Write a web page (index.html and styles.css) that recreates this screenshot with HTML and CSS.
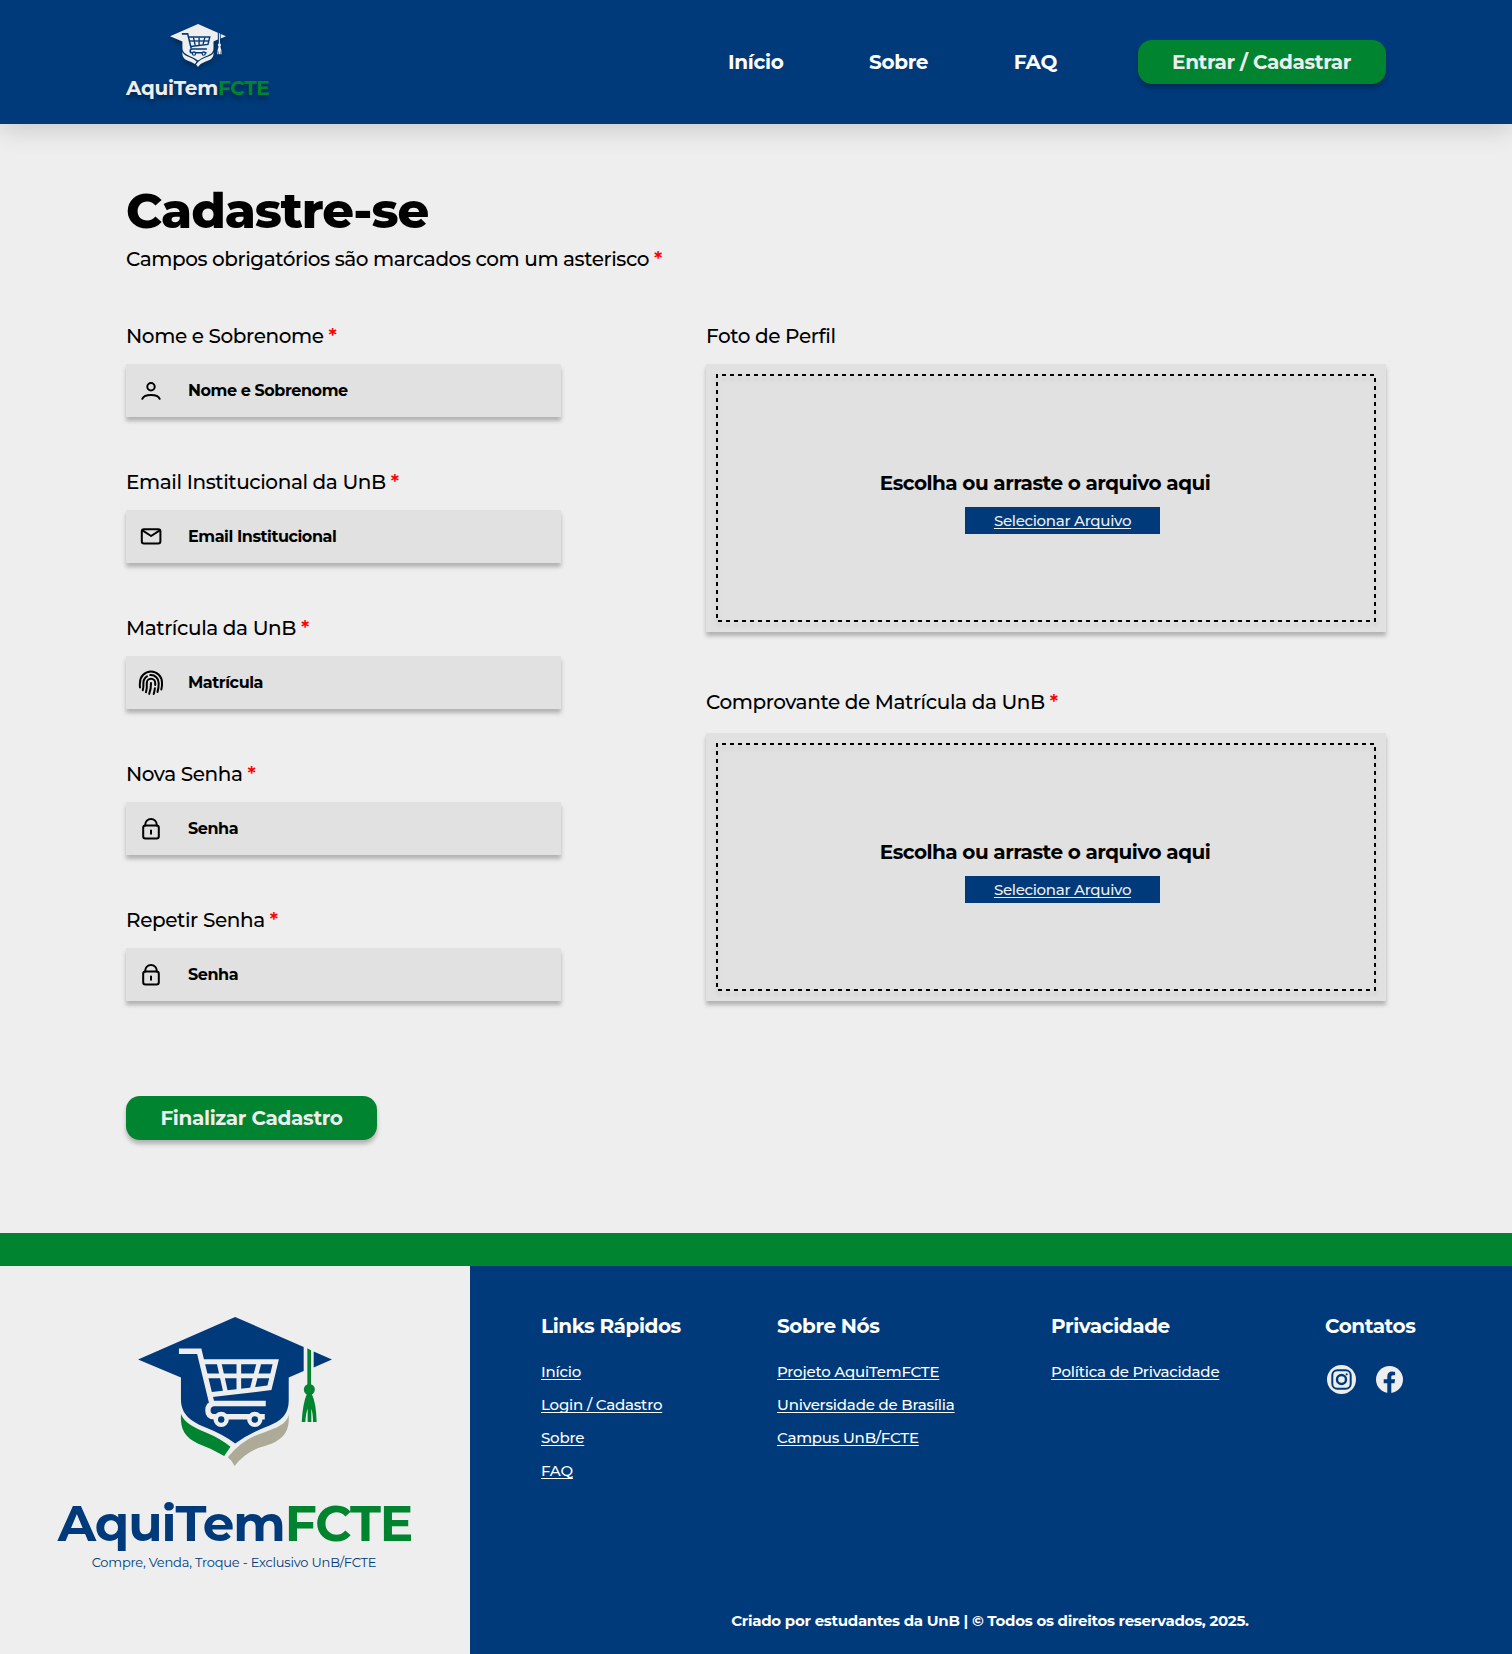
FILE: index.html
```html
<!DOCTYPE html>
<html lang="pt-BR">
<head>
<meta charset="utf-8">
<title>Cadastre-se | AquiTemFCTE</title>
<link rel="stylesheet" href="styles.css">
</head>
<body>
<svg class="sprite" width="0" height="0" aria-hidden="true">
  <symbol id="emblem" viewBox="54 50 583 448">
    <g class="emblem-cap">
      <path d="M54 178 346 50 552 140V212L507 232V300C507 350 475 366 440 380Q384 402 346 430Q308 402 252 380C214 364 183 343 183 298V232Z"/>
      <path d="M582 154 637 178 582 202Z"/>
    </g>
    <path class="emblem-left" d="M183 342C194 370 225 384 258 397Q300 414 332 440L313 468Q275 445 235 431C196 413 180 390 183 342Z"/>
    <path class="emblem-right" d="M507 345C500 373 470 384 432 397Q365 418 324 472Q337 482 344 498Q378 456 425 441C490 424 510 397 507 345Z"/>
    <g class="emblem-tassel">
      <path d="M563 144 574 150V256H563Z"/>
      <circle cx="569" cy="268" r="16.500"/>
      <path d="M562 280H576Q590 310 591 366H580Q580 340 575 326V366H564V326Q558 340 557 366H546Q549 310 562 280Z"/>
    </g>
    <g class="emblem-cart">
      <path d="M177 153H238L275 306" stroke-width="16"/>
      <path d="M247 184.500H468L449 263L270 284" stroke-width="15"/>
      <path d="M255 227H458" stroke-width="14"/>
      <path d="M298 190 317 275M357 190V272M417 190 397 268" stroke-width="14"/>
      <path d="M438 310H284Q264 312 264 331Q264 350 284 350H435" stroke-width="16"/>
      <circle cx="304" cy="358" r="16" stroke-width="14"/>
      <circle cx="405" cy="358" r="16" stroke-width="14"/>
    </g>
    <circle class="emblem-cap" cx="304" cy="358" r="9.500"/>
    <circle class="emblem-cap" cx="405" cy="358" r="9.500"/>
  </symbol>
  <symbol id="lock" viewBox="0 0 26 26">
    <rect x="5.200" y="9.500" width="15.600" height="13" rx="2.200"/>
    <path d="M7.200 9.500V8.900a5.800 6 0 0 1 11.600 0V9.500M13 14.500v3.200"/>
  </symbol>
</svg>

<header class="header">
  <a class="brand">
    <svg class="brand-emblem"><use href="#emblem"/></svg>
    <span class="brand-name">AquiTem<span class="green">FCTE</span></span>
  </a>
  <nav class="nav">
    <a>Início</a>
    <a>Sobre</a>
    <a>FAQ</a>
    <a class="btn btn-login">Entrar / Cadastrar</a>
  </nav>
</header>

<main class="main">
  <h1 class="title">Cadastre-se</h1>
  <p class="subtitle">Campos obrigatórios são marcados com um asterisco <span class="req">*</span></p>
  <form>
    <div class="columns">
      <div class="fields">
        <div class="field">
          <label class="label">Nome e Sobrenome <span class="req">*</span></label>
          <div class="input-box">
            <svg class="icon" viewBox="0 0 26 26"><circle cx="13" cy="8.700" r="3.700"/><path d="M4.300 20.800C6.500 15.800 19.500 15.800 21.700 20.800"/></svg>
            <input class="input" type="text" placeholder="Nome e Sobrenome">
          </div>
        </div>
        <div class="field">
          <label class="label">Email Institucional da UnB <span class="req">*</span></label>
          <div class="input-box">
            <svg class="icon" viewBox="0 0 26 26"><rect x="3.800" y="5.300" width="18.600" height="14.200" rx="2.200"/><path d="M4.800 6.600 13.100 12 21.400 6.600"/></svg>
            <input class="input" type="email" placeholder="Email Institucional">
          </div>
        </div>
        <div class="field">
          <label class="label">Matrícula da UnB <span class="req">*</span></label>
          <div class="input-box">
            <svg class="icon icon-print" viewBox="0 0 26 26"><path d="M2 17.500Q1.500 15.500 2 12.500A11 11 0 0 1 24 12.500Q24.300 16 23.300 19.500M4.800 20.200Q5.600 17 5.400 13A7.600 7.600 0 0 1 9 6.400M12.300 5.100A7.700 7.700 0 0 1 20.700 13Q20.800 17.500 19.500 22M8 22.300Q9.200 18 8.800 13A4.200 4.200 0 0 1 17.200 13V15M16.900 18.200Q16.600 21 15.700 24M11.200 23.900Q13.200 18.500 13 13"/></svg>
            <input class="input" type="text" placeholder="Matrícula">
          </div>
        </div>
        <div class="field">
          <label class="label">Nova Senha <span class="req">*</span></label>
          <div class="input-box">
            <svg class="icon"><use href="#lock"/></svg>
            <input class="input" type="password" placeholder="Senha">
          </div>
        </div>
        <div class="field">
          <label class="label">Repetir Senha <span class="req">*</span></label>
          <div class="input-box">
            <svg class="icon"><use href="#lock"/></svg>
            <input class="input" type="password" placeholder="Senha">
          </div>
        </div>
      </div>
      <div class="uploads">
        <div class="upload">
          <label class="label">Foto de Perfil</label>
          <div class="dropzone">
            <svg class="dashes"><rect x="1" y="1" width="658" height="246"/></svg>
            <p class="drop-text">Escolha ou arraste o arquivo aqui</p>
            <a class="drop-btn">Selecionar Arquivo</a>
          </div>
        </div>
        <div class="upload upload-proof">
          <label class="label">Comprovante de Matrícula da UnB <span class="req">*</span></label>
          <div class="dropzone">
            <svg class="dashes"><rect x="1" y="1" width="658" height="246"/></svg>
            <p class="drop-text">Escolha ou arraste o arquivo aqui</p>
            <a class="drop-btn">Selecionar Arquivo</a>
          </div>
        </div>
      </div>
    </div>
    <button class="btn btn-submit" type="button">Finalizar Cadastro</button>
  </form>
</main>

<footer class="footer">
  <section class="footer-brand">
    <svg class="footer-emblem"><use href="#emblem"/></svg>
    <p class="footer-name">AquiTem<span class="green">FCTE</span></p>
    <p class="tagline">Compre, Venda, Troque - Exclusivo UnB/FCTE</p>
  </section>
  <section class="footer-info">
    <div class="footer-cols">
      <div class="footer-col">
        <h2>Links Rápidos</h2>
        <a>Início</a>
        <a>Login / Cadastro</a>
        <a>Sobre</a>
        <a>FAQ</a>
      </div>
      <div class="footer-col">
        <h2>Sobre Nós</h2>
        <a>Projeto AquiTemFCTE</a>
        <a>Universidade de Brasília</a>
        <a>Campus UnB/FCTE</a>
      </div>
      <div class="footer-col">
        <h2>Privacidade</h2>
        <a>Política de Privacidade</a>
      </div>
      <div class="footer-col">
        <h2>Contatos</h2>
        <div class="social">
          <svg width="29" height="29" viewBox="0 0 29 29"><circle class="disc" cx="14.500" cy="14.500" r="14.500"/><rect class="line" x="5.300" y="5.300" width="18.400" height="18.400" rx="5"/><circle class="line ring" cx="14.500" cy="14.500" r="4.500"/><circle class="dot" cx="19.700" cy="9.300" r="1.100"/></svg>
          <svg width="27" height="27" viewBox="0 0 27 27"><circle class="disc" cx="13.500" cy="13.500" r="13.500"/><path class="dot" d="M11.300 27V17.200H7.700V13.200H11.300V10.400C11.300 7.200 13.200 5.600 16.200 5.600Q17.800 5.600 19.100 5.900V9.300H17.200C15.700 9.300 15.300 10 15.300 11.200V13.200H19.100L18.500 17.200H15.300V27Z"/></svg>
        </div>
      </div>
    </div>
    <p class="copyright">Criado por estudantes da UnB | © Todos os direitos reservados, 2025.</p>
  </section>
</footer>
</body>
</html>
```
FILE: styles.css
```css
:root {
  --blue: #003a7a;
  --green: #00842f;
  --light: #eeeeee;
  --shadow: 0 4px 4px rgba(0, 0, 0, .25);
}

* { box-sizing: border-box; margin: 0; padding: 0; }

body {
  background: var(--light);
  color: #000;
  font-family: "Montserrat", "Inter", sans-serif;
}

.sprite { display: block; position: absolute; }
.green { color: var(--green); }
.req { color: #f00; font-weight: 600; }

/* Emblem */
.emblem-cap { fill: var(--cap); }
.emblem-left { fill: var(--left); }
.emblem-right { fill: var(--right); }
.emblem-tassel { fill: var(--left); }
.emblem-cart { fill: none; stroke: var(--cart); }

/* Header */
.header {
  position: relative;
  display: flex;
  justify-content: space-between;
  align-items: center;
  height: 124px;
  padding: 0 126px;
  background: var(--blue);
  box-shadow: 0 4px 25px rgba(0, 0, 0, .17);
}
.brand {
  display: flex;
  flex-direction: column;
  align-items: center;
  gap: 9px;
  margin-top: -1px;
}
.brand-emblem {
  --cap: var(--light);
  --left: var(--light);
  --right: var(--light);
  --cart: var(--blue);
  width: 56px;
  height: 43px;
  filter: drop-shadow(0 4px 2px rgba(0, 0, 0, .25));
}
.brand-name {
  color: var(--light);
  font-size: 20px;
  font-weight: 700;
  letter-spacing: -.25px;
  line-height: 24px;
  text-shadow: 0 4px 4px rgba(0, 0, 0, .35);
}
.nav {
  display: flex;
  align-items: center;
  gap: 85.500px;
  color: #fff;
  font-size: 20px;
  font-weight: 700;
  letter-spacing: -.3px;
  line-height: 24px;
}
.btn {
  display: flex;
  align-items: center;
  justify-content: center;
  height: 44px;
  border: 0;
  border-radius: 14px;
  background: var(--green);
  box-shadow: var(--shadow);
  color: var(--light);
  font: 700 20px/24px "Montserrat", "Inter", sans-serif;
  letter-spacing: -.34px;
}
.btn-login { width: 248px; margin-left: -4.500px; padding-right: 1px; }
.btn-submit { width: 251px; margin-top: 95px; }

/* Form */
.main { height: 1109px; padding: 56px 126px 0; }
.title {
  font-size: 49.500px;
  font-weight: 800;
  letter-spacing: -1.100px;
  line-height: 60px;
}
.subtitle {
  margin-top: 7px;
  font-size: 20px;
  font-weight: 500;
  letter-spacing: -.42px;
  line-height: 24px;
}
.columns {
  display: flex;
  justify-content: space-between;
  margin-top: 53px;
}
.fields { display: flex; flex-direction: column; gap: 53px; width: 435px; }
.uploads { display: flex; flex-direction: column; gap: 58px; width: 680px; }
.field, .upload { display: flex; flex-direction: column; gap: 16px; }
.upload-proof { gap: 19px; }
.label {
  font-size: 20px;
  font-weight: 500;
  letter-spacing: -.4px;
  line-height: 24px;
}
.input-box {
  display: flex;
  align-items: center;
  gap: 24px;
  height: 53px;
  padding: 0 12px;
  background: #e1e1e1;
  box-shadow: var(--shadow);
}
.icon {
  flex: none;
  width: 26px;
  height: 26px;
  fill: none;
  stroke: #000;
  stroke-width: 2;
  stroke-linecap: round;
  stroke-linejoin: round;
}
.input {
  flex: 1;
  min-width: 0;
  padding-top: 1px;
  border: 0;
  background: none;
  font: 700 16px/20px "Montserrat", "Inter", sans-serif;
  letter-spacing: -.43px;
}
.input::placeholder { color: #000; opacity: 1; }
.dropzone {
  position: relative;
  display: flex;
  flex-direction: column;
  align-items: center;
  justify-content: center;
  gap: 12px;
  height: 268px;
  padding-top: 9px;
  background: #e1e1e1;
  box-shadow: var(--shadow);
}
.dashes {
  position: absolute;
  inset: 10px;
  width: 660px;
  height: 248px;
  overflow: visible;
  fill: none;
  stroke: #000;
  stroke-width: 2;
  stroke-dasharray: 4 4;
  stroke-dashoffset: 3;
  filter: drop-shadow(0 4px 2px rgba(0, 0, 0, .12));
}
.drop-text {
  margin-right: 2px;
  font-size: 20px;
  font-weight: 700;
  letter-spacing: -.5px;
  line-height: 24px;
}
.drop-btn {
  width: 195px;
  height: 27px;
  margin-left: 33px;
  background: var(--blue);
  color: var(--light);
  font-size: 15px;
  font-weight: 500;
  letter-spacing: -.3px;
  line-height: 27px;
  text-align: center;
  text-decoration: underline 1px;
  text-underline-offset: 2px;
  text-decoration-skip-ink: none;
}

/* Footer */
.footer {
  display: grid;
  grid-template-columns: 470px 1fr;
  height: 421px;
  border-top: 33px solid var(--green);
}
.footer-brand {
  display: flex;
  flex-direction: column;
  align-items: center;
  padding-top: 51px;
  color: var(--blue);
}
.footer-emblem {
  --cap: var(--blue);
  --left: var(--green);
  --right: #adab98;
  --cart: var(--light);
  width: 194px;
  height: 149px;
}
.footer-name {
  margin-top: 28px;
  font-size: 50px;
  font-weight: 700;
  letter-spacing: -1px;
  line-height: 60px;
}
.tagline { margin-right: 2px; font-size: 13px; letter-spacing: -.21px; line-height: 17px; }
.footer-info {
  display: flex;
  flex-direction: column;
  justify-content: space-between;
  padding: 48px 0 24px;
  background: var(--blue);
  color: #fff;
}
.footer-cols {
  display: grid;
  grid-template-columns: 236px 274px 274px 1fr;
  padding-left: 71px;
}
.footer-col {
  display: flex;
  flex-direction: column;
  align-items: flex-start;
  gap: 15px;
}
.footer-col h2 {
  margin-bottom: 10px;
  font-size: 20px;
  font-weight: 700;
  letter-spacing: -.42px;
  line-height: 24px;
}
.footer-col a {
  font-size: 15px;
  font-weight: 500;
  letter-spacing: -.2px;
  line-height: 18px;
  text-decoration: underline 1px;
  text-underline-offset: 2px;
  text-decoration-skip-ink: none;
}
.social { display: flex; align-items: center; gap: 20px; margin: 2px 0 0 2px; }
.disc { fill: var(--light); }
.dot { fill: var(--blue); }
.line { fill: none; stroke: var(--blue); stroke-width: 2; }
.ring { stroke-width: 2.400; }
.copyright {
  padding-right: 2px;
  font-size: 15px;
  font-weight: 700;
  letter-spacing: -.28px;
  line-height: 18px;
  text-align: center;
}
```
